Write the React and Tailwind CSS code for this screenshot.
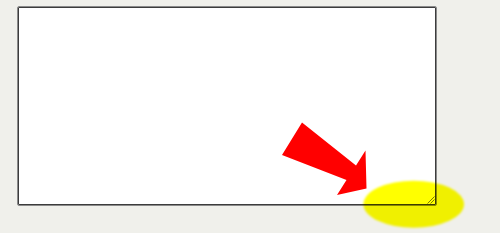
import React from "react";

export default function App() {
  return (
    <div className="relative w-[500px] h-[233px] bg-[#f0f0eb] overflow-hidden">
      <div className="pl-[17px] pt-[6px]">
        <div className="relative w-[420px] h-[200px]">
          <textarea
            className="block w-[420px] h-[200px] resize-none bg-white border border-[#8a8a8a] shadow-[inset_0_0_0_1px_#3c3c3c] rounded-[2px] outline-none"
            defaultValue=""
          />
          <svg className="absolute right-[2px] bottom-[2px]" width="8" height="8" viewBox="0 0 8 8">
            <line x1="0.5" y1="7.5" x2="7.5" y2="0.5" stroke="#7a7a7a" strokeWidth="1" />
            <line x1="3.5" y1="7.5" x2="7.5" y2="3.5" stroke="#7a7a7a" strokeWidth="1" />
          </svg>
        </div>
      </div>
      <svg className="absolute left-0 top-0 pointer-events-none" width="500" height="233" viewBox="0 0 500 233">
        <polygon
          points="302,122.5 282,155 346.5,180 337,195 366.5,188.5 365.5,150.5 356,165.5"
          fill="#ff0000"
        />
      </svg>
      <svg className="absolute left-0 top-0 pointer-events-none mix-blend-multiply" width="500" height="233" viewBox="0 0 500 233">
        <defs>
          <filter id="blur" x="-10%" y="-20%" width="120%" height="140%">
            <feGaussianBlur stdDeviation="0.8" />
          </filter>
        </defs>
        <ellipse cx="413.7" cy="204.2" rx="50.3" ry="23.5" fill="#ffff00" filter="url(#blur)" />
      </svg>
    </div>
  );
}
